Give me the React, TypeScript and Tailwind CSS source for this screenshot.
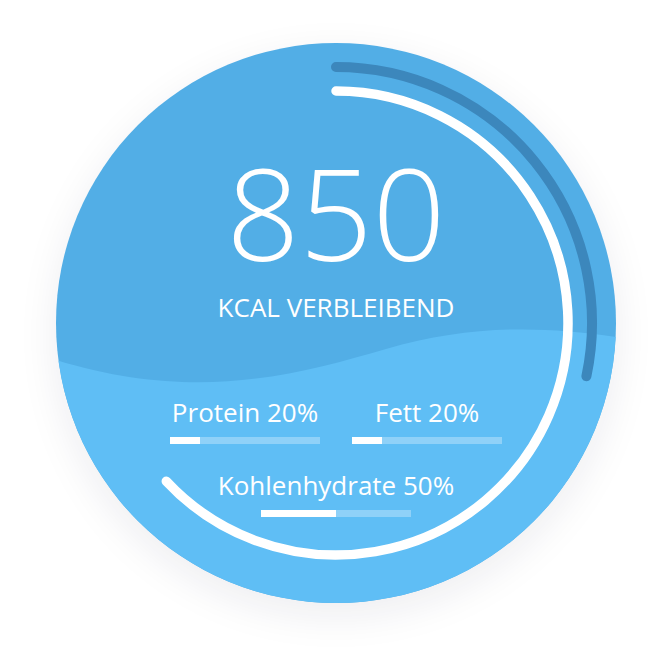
import React from "react";

const macros = [
  { label: "Protein 20%", pct: 20 },
  { label: "Fett 20%", pct: 20 },
];

function Bar({ pct }: { pct: number }) {
  return (
    <div className="w-[150px] h-[7px] bg-white/30 flex">
      <div className="h-full bg-white" style={{ width: `${pct}%` }} />
    </div>
  );
}

export default function App() {
  return (
    <div className="w-[660px] h-[660px] bg-white pl-[56px] pt-[43px] font-['Open_Sans',sans-serif]">
      <div className="relative w-[560px] h-[560px] rounded-full overflow-hidden bg-[#52aee6] shadow-[0_12px_40px_rgba(20,30,60,0.08)]">
        <svg className="absolute inset-0" width="560" height="560" viewBox="0 0 560 560">
          <path
            d="M0,317 C140,360 240,332 330,306 C410,283 480,282 560,294 L560,560 L0,560 Z"
            fill="#5fbef5"
          />
          <path
            d="M280,24 A256,256 0 0 1 530.4,333.2"
            fill="none"
            stroke="#3c87bc"
            strokeWidth="10"
            strokeLinecap="round"
          />
          <path
            d="M280,48 A232,232 0 1 1 110.3,438.2"
            fill="none"
            stroke="#ffffff"
            strokeWidth="9.5"
            strokeLinecap="round"
          />
        </svg>
        <div className="relative flex flex-col items-center pt-[105px] text-white">
          <div className="text-[128px] leading-[0.9] h-[128px] pt-[6px] font-light">850</div>
          <div className="mt-[18px] text-[26px] leading-none">KCAL VERBLEIBEND</div>
          <div className="mt-[79px] flex gap-[32px]">
            {macros.map((m) => (
              <div key={m.label} className="flex flex-col items-center">
                <div className="text-[26px] leading-none">{m.label}</div>
                <div className="mt-[12px]">
                  <Bar pct={m.pct} />
                </div>
              </div>
            ))}
          </div>
          <div className="mt-[28px] flex flex-col items-center">
            <div className="text-[26px] leading-none">Kohlenhydrate 50%</div>
            <div className="mt-[12px]">
              <Bar pct={50} />
            </div>
          </div>
        </div>
      </div>
    </div>
  );
}
